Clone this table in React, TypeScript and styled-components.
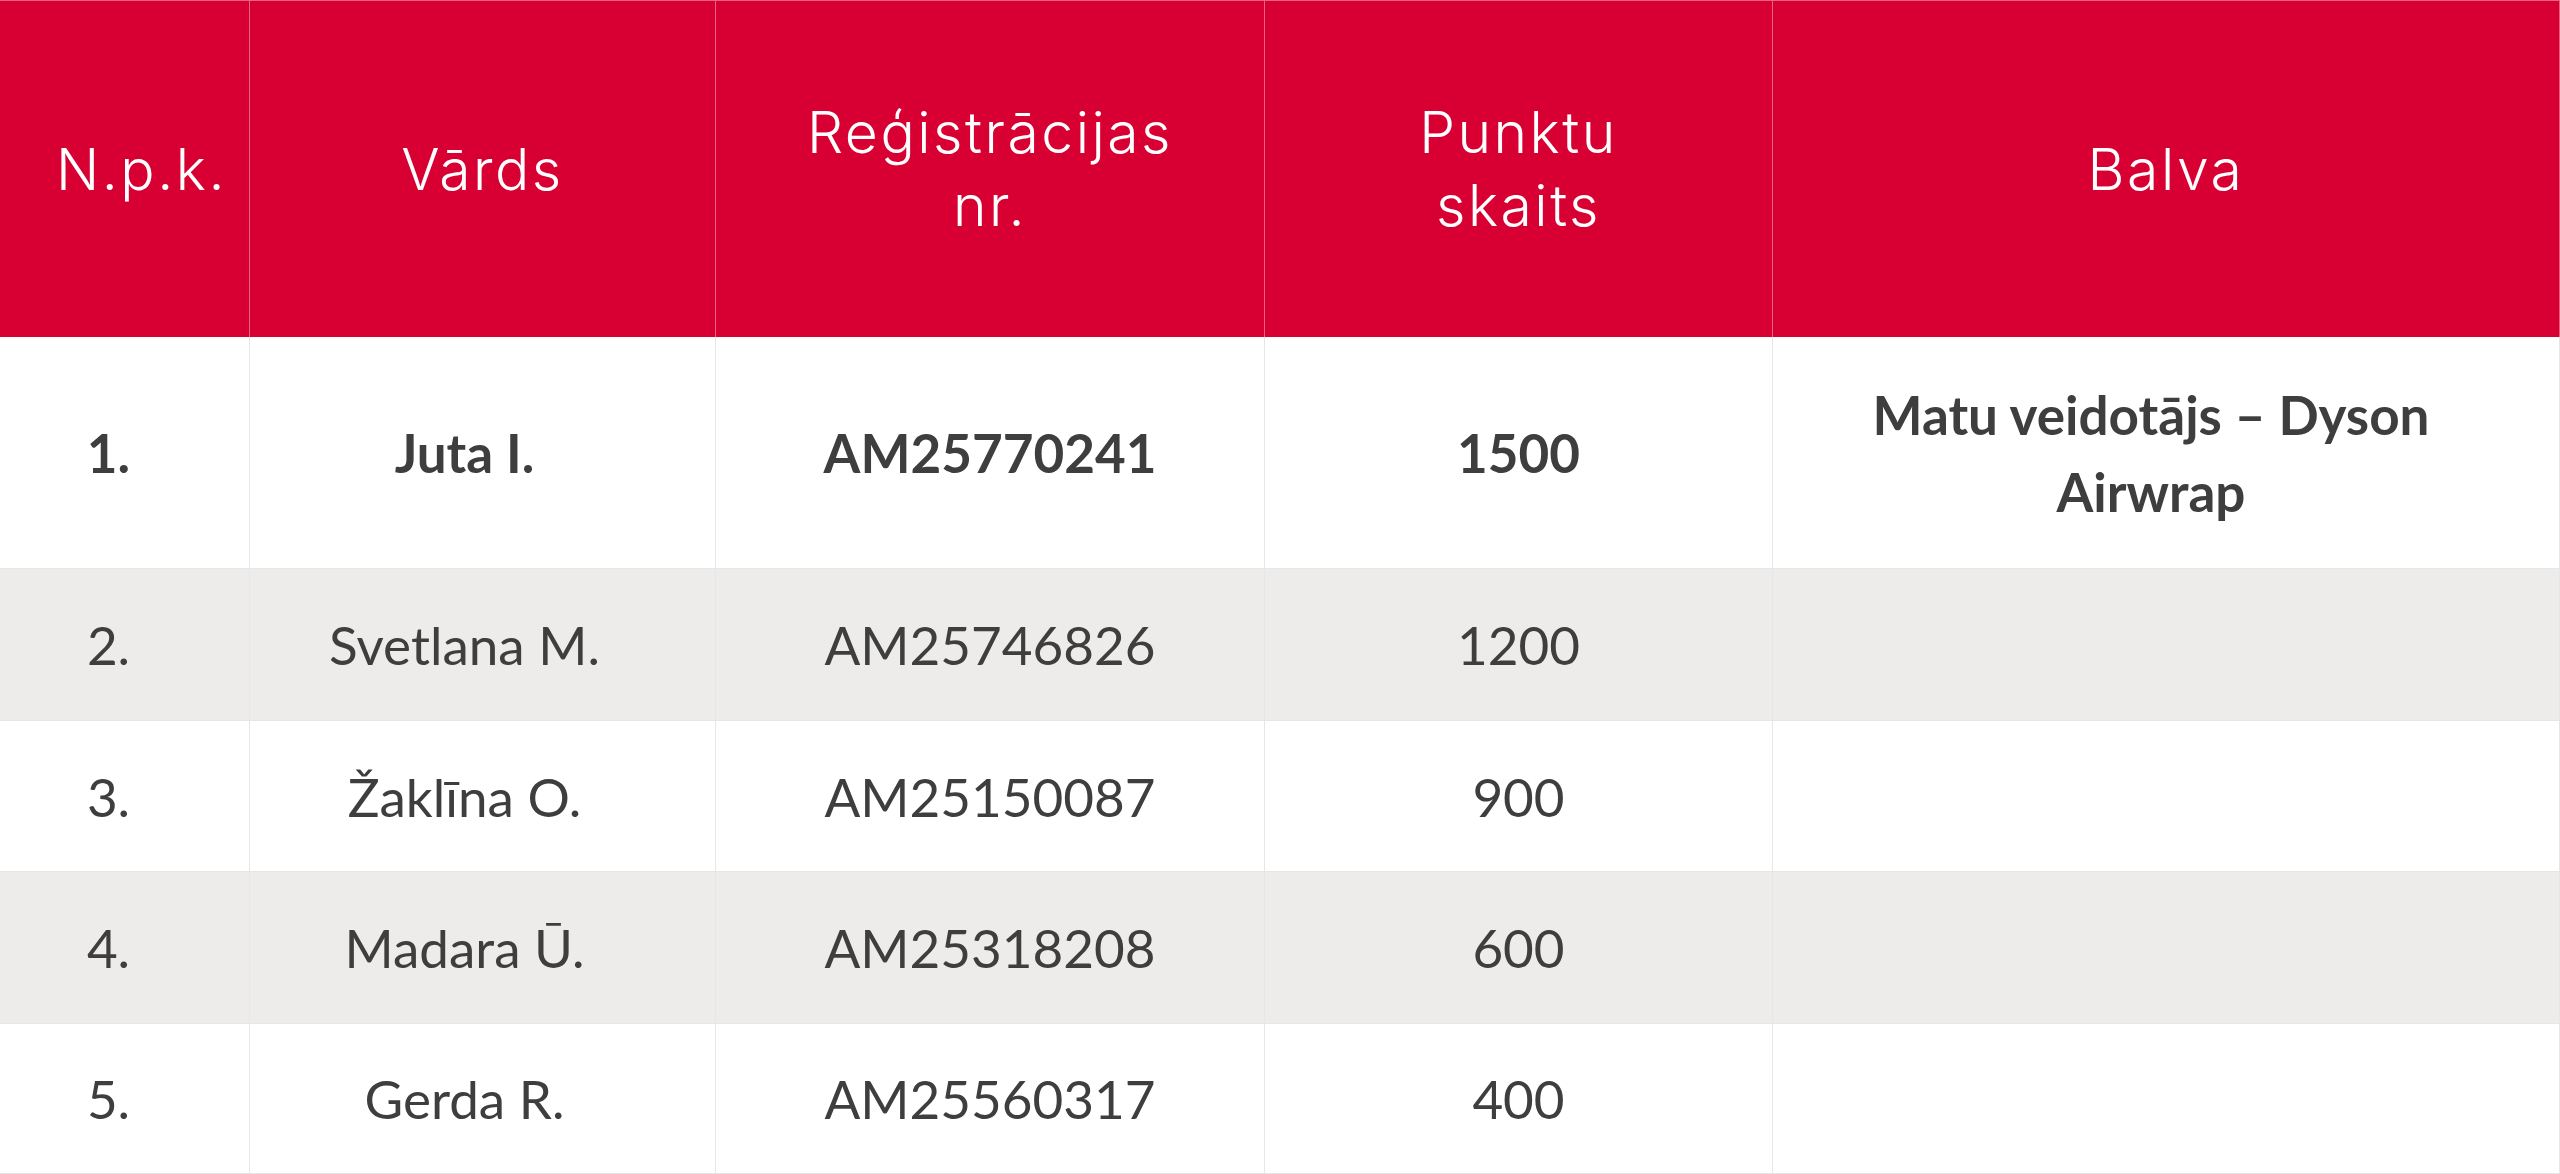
import React from "react";
import styled, { createGlobalStyle } from "styled-components";

const Global = createGlobalStyle`
  html, body { margin: 0; padding: 0; background: #ffffff; }
  #root { width: 2560px; }
`;

const Table = styled.div`
  display: grid;
  grid-template-columns: 250px 466px 549px 508px 787px;
  grid-template-rows: 337px 232px 152px 151px 152px 150px;
  width: 2560px;
  height: 1174px;
  font-family: Lato, "Open Sans", sans-serif;
`;

const HeadCell = styled.div<{ $pad?: string }>`
  background: #d80032;
  color: #ffffff;
  font-family: Inter, Lato, sans-serif;
  font-weight: 300;
  font-size: 57px;
  line-height: 73px;
  letter-spacing: 2.5px;
  display: flex;
  align-items: center;
  justify-content: center;
  text-align: center;
  box-sizing: border-box;
  padding: ${(p) => p.$pad || "0"};
  border-top: 1px solid #e9647f;
  border-right: 1px solid #e9647f;
`;

const Cell = styled.div<{ $alt?: boolean; $bold?: boolean; $pad?: string }>`
  background: ${(p) => (p.$alt ? "#edeceb" : "#ffffff")};
  color: #3e3e3e;
  font-weight: ${(p) => (p.$bold ? 700 : 400)};
  font-size: 53px;
  line-height: 77px;
  display: flex;
  align-items: center;
  justify-content: center;
  text-align: center;
  box-sizing: border-box;
  padding: ${(p) => p.$pad || "0 60px"};
  border-right: 1px solid #e6e6e6;
  border-bottom: 1px solid #e6e6e6;
`;

const headers = ["N.p.k.", "Vārds", "Reģistrācijas\nnr.", "Punktu\nskaits", "Balva"];

const rows = [
  ["1.", "Juta I.", "AM25770241", "1500", "Matu veidotājs – Dyson Airwrap"],
  ["2.", "Svetlana M.", "AM25746826", "1200", ""],
  ["3.", "Žaklīna O.", "AM25150087", "900", ""],
  ["4.", "Madara Ū.", "AM25318208", "600", ""],
  ["5.", "Gerda R.", "AM25560317", "400", ""],
];

const cellPad = ["0 32px 0 0", "0 36px 0 0", undefined, undefined, "0 80px 0 50px"];

const Lines = ({ text }: { text: string }) => (
  <span>
    {text.split("\n").map((t, i) => (
      <React.Fragment key={i}>
        {i > 0 && <br />}
        {t}
      </React.Fragment>
    ))}
  </span>
);

export default function App() {
  return (
    <>
      <Global />
      <Table>
        {headers.map((h, i) => (
          <HeadCell key={h} $pad={i === 0 ? "0 0 0 34px" : undefined}>
            <Lines text={h} />
          </HeadCell>
        ))}
        {rows.map((r, ri) =>
          r.map((c, ci) => (
            <Cell
              key={`${ri}-${ci}`}
              $alt={ri % 2 === 1}
              $bold={ri === 0}
              $pad={cellPad[ci]}
            >
              {c}
            </Cell>
          ))
        )}
      </Table>
    </>
  );
}
